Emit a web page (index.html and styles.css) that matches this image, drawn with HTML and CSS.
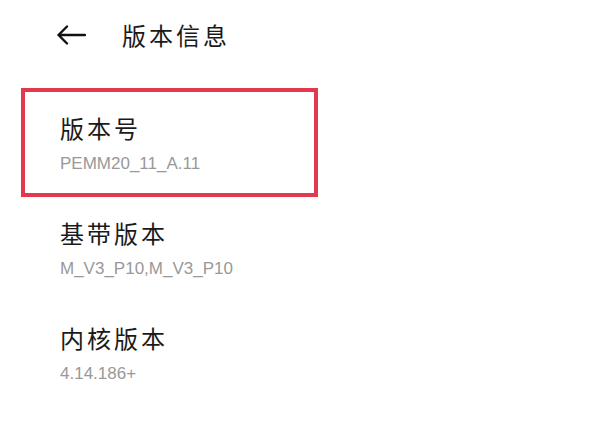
FILE: index.html
```html
<!DOCTYPE html>
<html lang="zh-CN">
<head>
  <meta charset="UTF-8">
  <title>版本信息</title>
  <meta name="viewport" content="width=device-width, initial-scale=1.0">
  <link rel="stylesheet" href="styles.css">
</head>
<body>

  <!-- ====== Top Bar ====== -->
  <header class="top-bar">
    <a class="back" href="#">
      <svg width="30" height="20" viewBox="0 0 30 20">
        <path d="M29 10H2.5M11 1.5L2.5 10L11 18.5" fill="none" stroke="#111" stroke-width="2.4" stroke-linecap="round" stroke-linejoin="round"/>
      </svg>
    </a>
    <h1 class="page-title">版本信息</h1>
  </header>

  <!-- ====== Version List ====== -->
  <ul class="info-list">
    <li class="info-item marked">
      <div class="info-label">版本号</div>
      <div class="info-value">PEMM20_11_A.11</div>
    </li>
    <li class="info-item">
      <div class="info-label">基带版本</div>
      <div class="info-value">M_V3_P10,M_V3_P10</div>
    </li>
    <li class="info-item">
      <div class="info-label">内核版本</div>
      <div class="info-value">4.14.186+</div>
    </li>
  </ul>

</body>
</html>
```

FILE: styles.css
```css
/* ====== General Styles ====== */
body {
  margin: 0;
  background: #fff;
  color: #1a1a1a;
  font-family: "Noto Sans CJK SC", "Noto Sans", sans-serif;
}

/* ====== Top Bar ====== */
.top-bar {
  display: flex;
  align-items: center;
  height: 70px;
  padding-left: 56px;
}

.back {
  display: flex;
}

.page-title {
  margin: 0 0 0 36px;
  font-size: 24px;
  font-weight: normal;
  letter-spacing: 3px;
  line-height: 1.2;
}

/* ====== Version List ====== */
.info-list {
  list-style: none;
  margin: 20px 0 0 23px;
  padding: 0;
  width: 293px;
}

.info-item {
  box-sizing: border-box;
  height: 105px;
  padding: 23px 0 0 37px;
}

.info-item.marked {
  outline: 4px solid #e2394f;
  outline-offset: -2px;
}

.info-label {
  font-size: 24px;
  letter-spacing: 3px;
  line-height: 29px;
}

.info-value {
  margin-top: 12px;
  font-family: "Liberation Sans", Arial, sans-serif;
  font-size: 17px;
  line-height: 20px;
  color: #999;
}
```
